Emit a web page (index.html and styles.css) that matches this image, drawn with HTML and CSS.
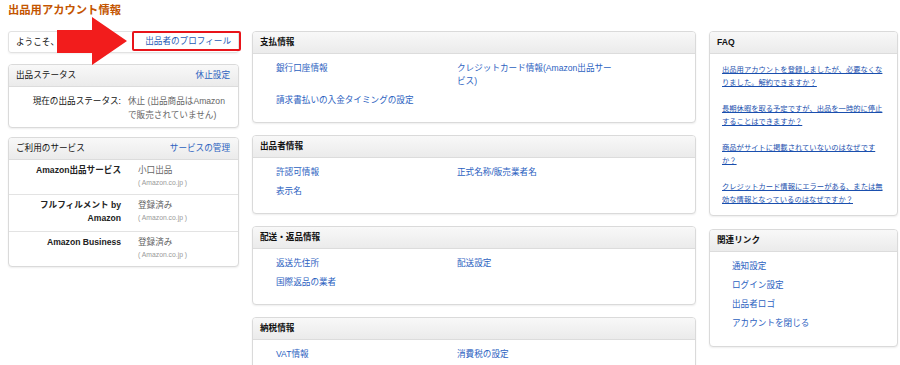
FILE: index.html
```html
<!DOCTYPE html>
<html lang="ja">
<head>
    <meta charset="UTF-8">
    <meta name="viewport" content="width=device-width, initial-scale=1.0">
    <title>出品用アカウント情報</title>
    <link rel="stylesheet" href="styles.css">
</head>
<body>
    <h1 class="page-title">出品用アカウント情報</h1>

    <div class="layout">
        <div class="col">
            <div class="welcome">
                <span>ようこそ、</span>
                <a class="profile-link" href="#">出品者のプロフィール</a>
            </div>

            <div class="card status-card">
                <div class="card-head plain">
                    <span>出品ステータス</span>
                    <a href="#">休止設定</a>
                </div>
                <div class="status-body">
                    <div class="label">現在の出品ステータス:</div>
                    <div class="value">休止 (出品商品はAmazonで販売されていません)</div>
                </div>
            </div>

            <div class="card">
                <div class="card-head plain">
                    <span>ご利用のサービス</span>
                    <a href="#">サービスの管理</a>
                </div>
                <div class="service-row">
                    <div class="service-name">Amazon出品サービス</div>
                    <div class="value">小口出品<span class="market">( Amazon.co.jp )</span></div>
                </div>
                <div class="service-row">
                    <div class="service-name">フルフィルメント by Amazon</div>
                    <div class="value">登録済み<span class="market">( Amazon.co.jp )</span></div>
                </div>
                <div class="service-row">
                    <div class="service-name">Amazon Business</div>
                    <div class="value">登録済み<span class="market">( Amazon.co.jp )</span></div>
                </div>
            </div>
        </div>

        <div class="col">
            <div class="card">
                <div class="card-head">支払情報</div>
                <div class="link-grid">
                    <a href="#">銀行口座情報</a>
                    <a href="#">クレジットカード情報(Amazon出品サービス)</a>
                    <a href="#">請求書払いの入金タイミングの設定</a>
                </div>
            </div>
            <div class="card">
                <div class="card-head">出品者情報</div>
                <div class="link-grid">
                    <a href="#">許認可情報</a>
                    <a href="#">正式名称/販売業者名</a>
                    <a href="#">表示名</a>
                </div>
            </div>
            <div class="card">
                <div class="card-head">配送・返品情報</div>
                <div class="link-grid">
                    <a href="#">返送先住所</a>
                    <a href="#">配送設定</a>
                    <a href="#">国際返品の業者</a>
                </div>
            </div>
            <div class="card">
                <div class="card-head">納税情報</div>
                <div class="link-grid">
                    <a href="#">VAT情報</a>
                    <a href="#">消費税の設定</a>
                </div>
            </div>
        </div>

        <div class="col">
            <div class="card side-card">
                <div class="card-head">FAQ</div>
                <div class="faq-list">
                    <a href="#">出品用アカウントを登録しましたが、必要なくなりました。解約できますか？</a>
                    <a href="#">長期休暇を取る予定ですが、出品を一時的に停止することはできますか？</a>
                    <a href="#">商品がサイトに掲載されていないのはなぜですか？</a>
                    <a href="#">クレジットカード情報にエラーがある、または無効な情報となっているのはなぜですか？</a>
                </div>
            </div>
            <div class="card side-card">
                <div class="card-head">関連リンク</div>
                <div class="related-list">
                    <a href="#">通知設定</a>
                    <a href="#">ログイン設定</a>
                    <a href="#">出品者ロゴ</a>
                    <a href="#">アカウントを閉じる</a>
                </div>
            </div>
        </div>
    </div>

    <svg class="arrow" width="72" height="50" viewBox="0 0 72 50">
        <polygon points="0,13 35,13 35,0 70,24 35,48 35,36 0,36" fill="#f21c1c"/>
    </svg>
</body>
</html>
```

FILE: styles.css
```css
body {
    margin: 0;
    padding: 3px 0 0 8px;
    font-family: "Liberation Sans", "Noto Sans CJK JP", sans-serif;
    font-size: 8.6px;
    line-height: 13px;
    color: #111;
    background-color: #fff;
}
a {
    color: #2c62bf;
    text-decoration: none;
}
.page-title {
    margin: 0 0 14px;
    font-size: 11.3px;
    line-height: 14px;
    font-weight: bold;
    color: #c45500;
}
.layout {
    display: grid;
    grid-template-columns: 231px 444px 189px;
    column-gap: 13px;
    align-items: start;
}

/* cards */
.card {
    background-color: #fff;
    border: 1px solid #dadada;
    border-radius: 4px;
    box-shadow: 0 1px 2px rgba(0, 0, 0, 0.07);
    margin-bottom: 12px;
    overflow: hidden;
}
.card-head {
    display: flex;
    align-items: center;
    justify-content: space-between;
    height: 21px;
    padding: 0 8px 0 7px;
    background: linear-gradient(#f8f8f8, #ebebeb);
    border-bottom: 1px solid #dcdcdc;
    font-weight: bold;
    color: #111;
}
.card-head.plain {
    font-weight: normal;
}

/* left column */
.welcome {
    display: flex;
    justify-content: space-between;
    align-items: flex-start;
    height: 20px;
    padding-left: 7px;
    border: 1px solid #e2e2e2;
    border-radius: 3px;
    box-shadow: 0 1px 2px rgba(0, 0, 0, 0.06);
    margin-bottom: 11px;
}
.welcome span {
    line-height: 20px;
}
.profile-link {
    margin: -1px -3px 0 0;
    padding: 0 8px 0 11px;
    border: 2px solid #e8141a;
    border-radius: 2px;
    line-height: 16px;
    white-space: nowrap;
    color: #1f5bb5;
}
.status-card {
    margin-bottom: 9px;
}
.status-body {
    display: grid;
    grid-template-columns: 104px 1fr;
    column-gap: 7px;
    padding: 7px 8px 5px 8px;
    line-height: 14px;
}
.label {
    text-align: right;
}
.value {
    color: #666;
}
.service-row {
    display: grid;
    grid-template-columns: 104px 1fr;
    column-gap: 17px;
    padding: 4px 8px 6px 8px;
    border-bottom: 1px solid #e3e3e3;
}
.service-row:last-child {
    border-bottom: none;
}
.service-name {
    text-align: right;
    font-weight: bold;
    color: #222;
}
.market {
    display: block;
    font-size: 6.8px;
    line-height: 11px;
    color: #999;
}

/* middle column */
.link-grid {
    display: grid;
    grid-template-columns: 181px 155px;
    row-gap: 6px;
    padding: 8px 0 15px 23px;
}

/* right column */
.side-card {
    margin-bottom: 13px;
}
.faq-list {
    display: flex;
    flex-direction: column;
    gap: 13px;
    padding: 9px 12px 9px 12px;
    font-size: 7.3px;
}
.faq-list a {
    color: #1a4fae;
    text-decoration: underline;
}
.related-list {
    display: flex;
    flex-direction: column;
    gap: 6px;
    padding: 8px 0 16px 22px;
}
.related-list a {
    align-self: flex-start;
}

/* annotation arrow */
.arrow {
    position: absolute;
    left: 57px;
    top: 17px;
}
```
